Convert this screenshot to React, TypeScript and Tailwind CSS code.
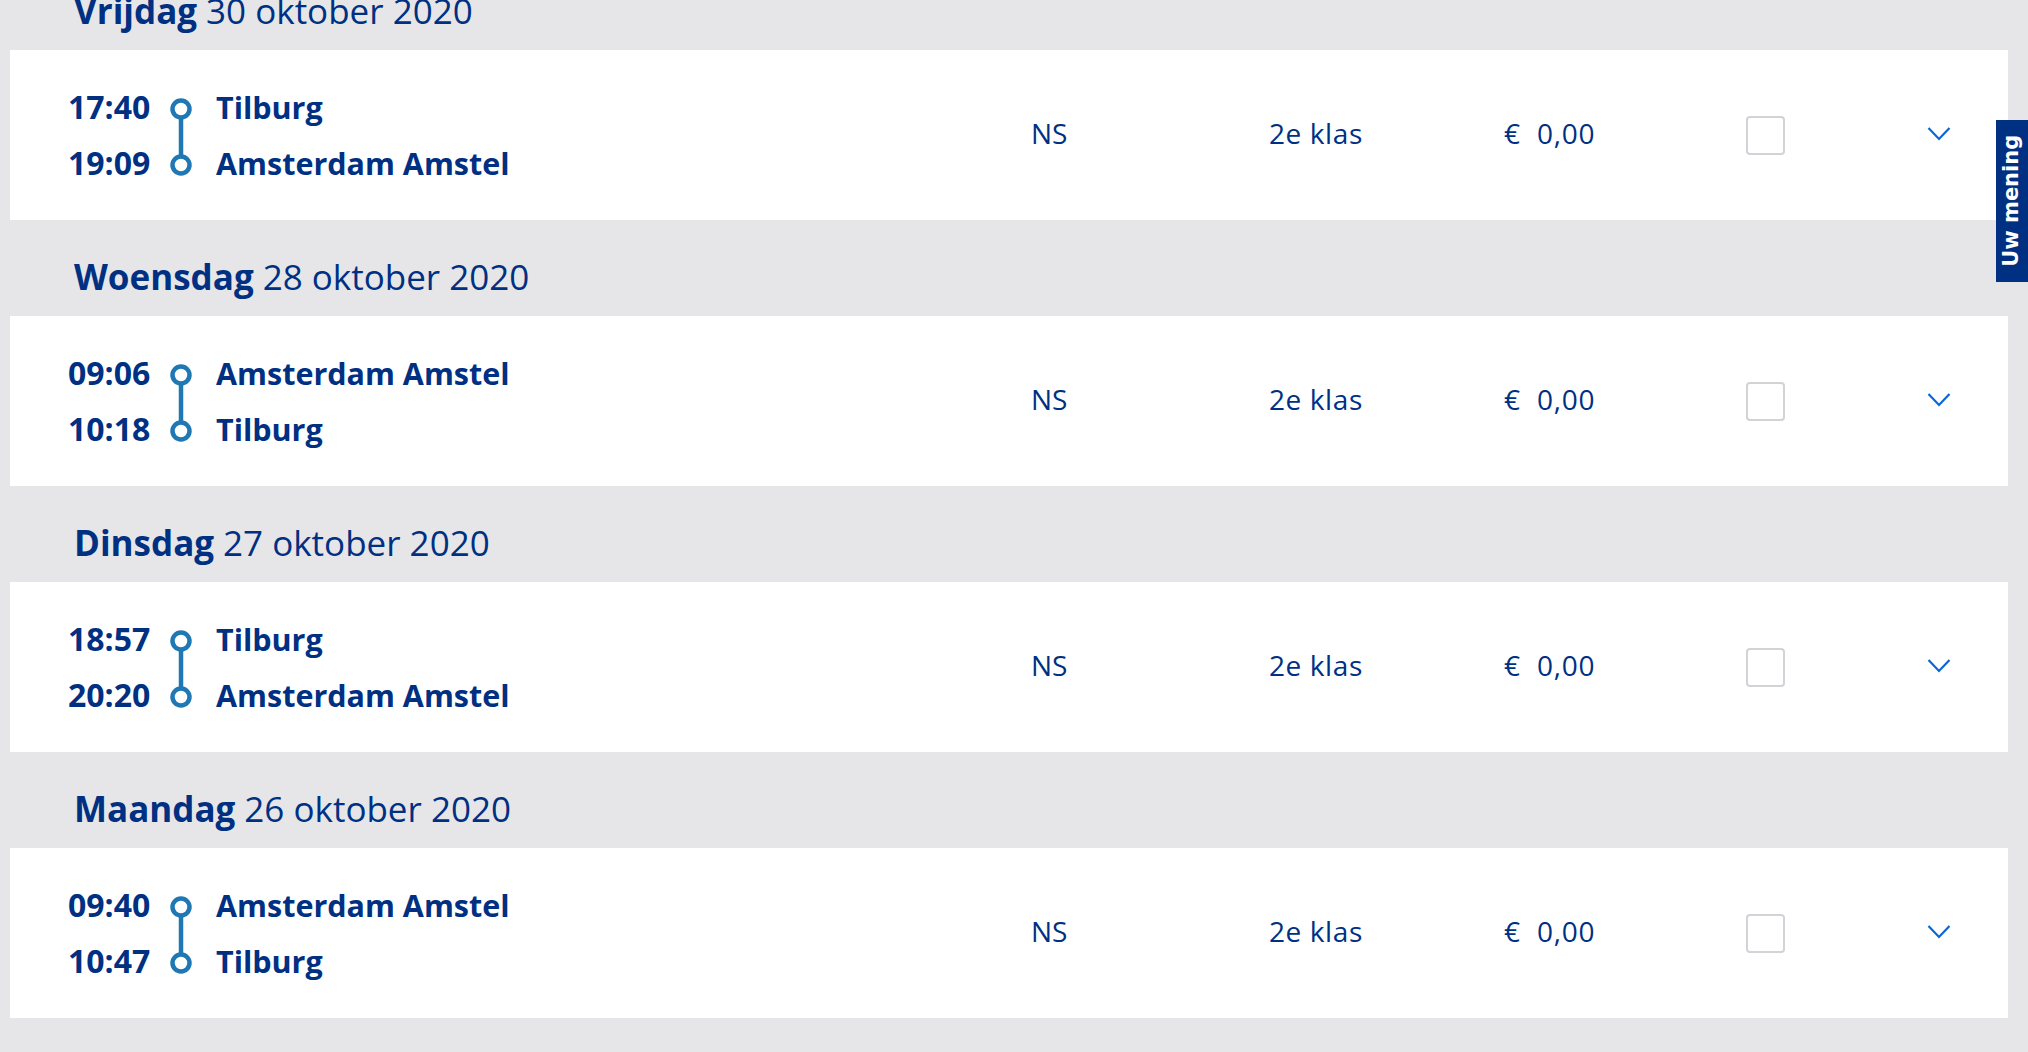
const trips = [
  {
    day: "Vrijdag",
    date: "30 oktober 2020",
    dep: "17:40",
    arr: "19:09",
    from: "Tilburg",
    to: "Amsterdam Amstel",
  },
  {
    day: "Woensdag",
    date: "28 oktober 2020",
    dep: "09:06",
    arr: "10:18",
    from: "Amsterdam Amstel",
    to: "Tilburg",
  },
  {
    day: "Dinsdag",
    date: "27 oktober 2020",
    dep: "18:57",
    arr: "20:20",
    from: "Tilburg",
    to: "Amsterdam Amstel",
  },
  {
    day: "Maandag",
    date: "26 oktober 2020",
    dep: "09:40",
    arr: "10:47",
    from: "Amsterdam Amstel",
    to: "Tilburg",
  },
];

function RouteLine() {
  return (
    <svg width="26" height="82" viewBox="0 0 26 82" className="shrink-0">
      <line x1="13" y1="20" x2="13" y2="60" stroke="#1f78b4" strokeWidth="4.5" />
      <circle cx="13" cy="12" r="8.5" fill="white" stroke="#1f78b4" strokeWidth="4.5" />
      <circle cx="13" cy="68" r="8.5" fill="white" stroke="#1f78b4" strokeWidth="4.5" />
    </svg>
  );
}

function Chevron() {
  return (
    <svg width="24" height="16" viewBox="0 0 24 16" fill="none">
      <path d="M1.5 2 L12 13 L22.5 2" stroke="#0a66d6" strokeWidth="2.2" />
    </svg>
  );
}

export default function App() {
  return (
    <div
      className="relative min-h-[1052px] overflow-hidden bg-[#e6e6e9] pl-[10px] pr-[20px] text-[#003082]"
      style={{ fontFamily: '"Open Sans", "Noto Sans", sans-serif' }}
    >
      <div className="-mt-[46px] flex flex-col">
        {trips.map((t) => (
          <div key={t.date}>
            {/* Day heading */}
            <div className="flex h-[96px] pl-[64px] pt-[39px] text-[35px] leading-none">
              <span className="font-bold">{t.day}</span>
              <span className="ml-[9px]">{t.date}</span>
            </div>

            {/* Trip card */}
            <div className="flex h-[170px] items-center bg-white pl-[58px]">
              <div className="flex w-[963px] items-center">
                <div className="flex w-[100px] flex-col gap-[24px] text-[32px] font-bold leading-[32px]">
                  <span>{t.dep}</span>
                  <span>{t.arr}</span>
                </div>
                <div className="mt-[6px]">
                  <RouteLine />
                </div>
                <div className="ml-[22px] flex flex-col gap-[24px] text-[30.5px] font-bold leading-[32px]">
                  <span>{t.from}</span>
                  <span>{t.to}</span>
                </div>
              </div>
              <div className="mt-[-5px] flex items-center">
                <div className="w-[238px] text-[28px]">NS</div>
                <div className="w-[235px] text-[28px] tracking-[0.6px]">2e klas</div>
                <div className="w-[242px] text-[28px] tracking-[0.8px]">€&nbsp;&nbsp;0,00</div>
              </div>
              <div className="h-[39px] w-[39px] rounded-[4px] border-2 border-[#d2d2d7] bg-white" />
              <div className="ml-[142px] mt-[-2px]">
                <Chevron />
              </div>
            </div>
          </div>
        ))}
      </div>

      {/* Feedback tab */}
      <div className="absolute right-0 top-[120px] flex h-[162px] w-[32px] items-center justify-center bg-[#003082]">
        <span
          className="-rotate-90 whitespace-nowrap text-[21px] font-bold text-white"
          style={{ fontFamily: '"DejaVu Sans", sans-serif' }}
        >
          Uw mening
        </span>
      </div>
    </div>
  );
}
